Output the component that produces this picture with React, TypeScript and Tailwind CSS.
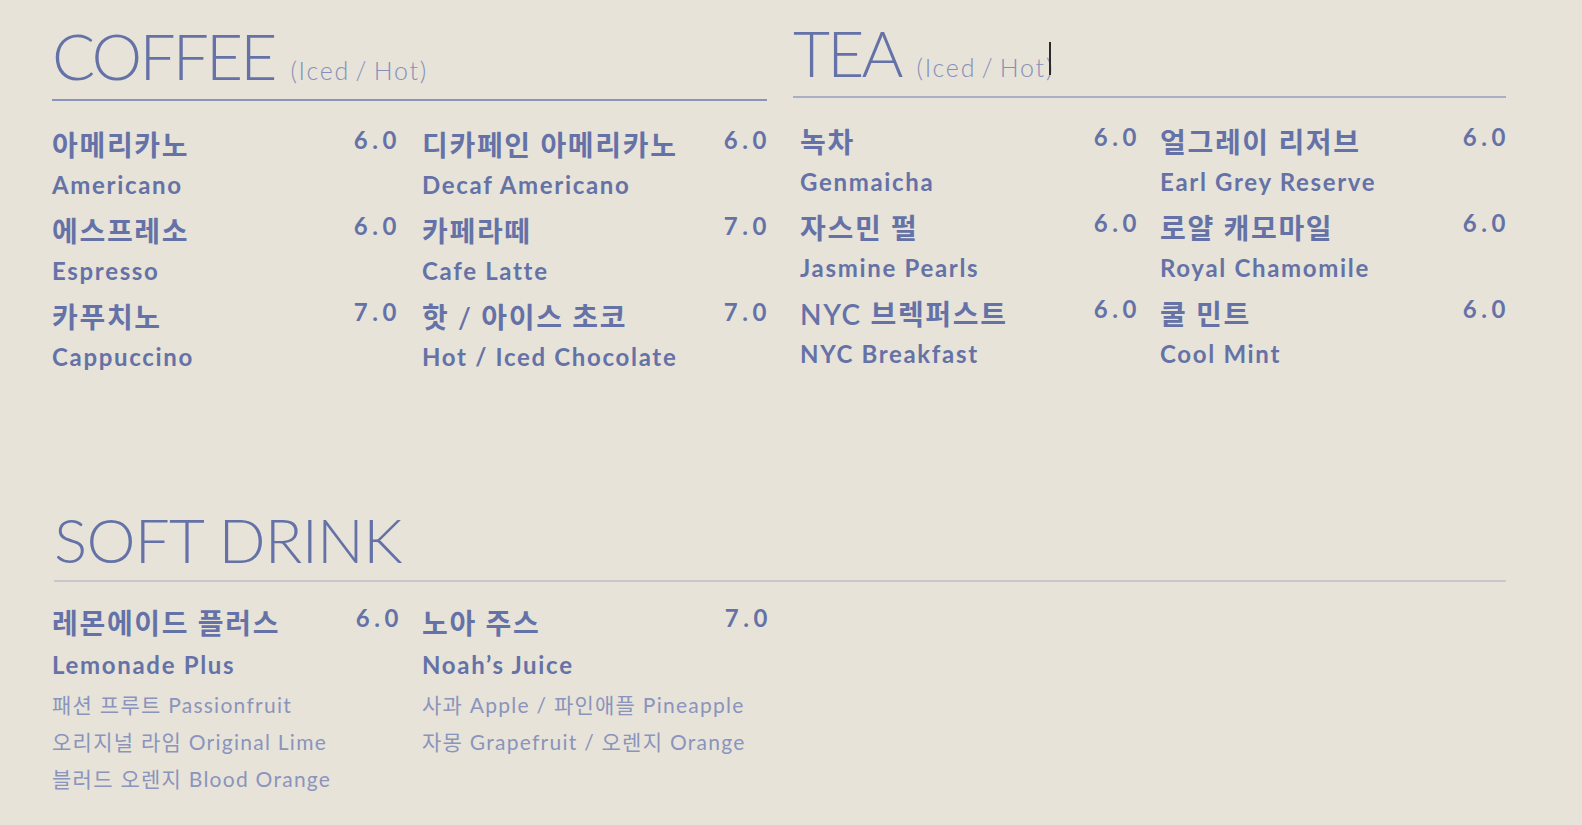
import React from "react";

type Item = { ko: string; en: string; price: string; notes?: string[] };

const coffee: Item[] = [
  { ko: "아메리카노", en: "Americano", price: "6.0" },
  { ko: "디카페인 아메리카노", en: "Decaf Americano", price: "6.0" },
  { ko: "에스프레소", en: "Espresso", price: "6.0" },
  { ko: "카페라떼", en: "Cafe Latte", price: "7.0" },
  { ko: "카푸치노", en: "Cappuccino", price: "7.0" },
  { ko: "핫 / 아이스 초코", en: "Hot / Iced Chocolate", price: "7.0" },
];

const tea: Item[] = [
  { ko: "녹차", en: "Genmaicha", price: "6.0" },
  { ko: "얼그레이 리저브", en: "Earl Grey Reserve", price: "6.0" },
  { ko: "자스민 펄", en: "Jasmine Pearls", price: "6.0" },
  { ko: "로얄 캐모마일", en: "Royal Chamomile", price: "6.0" },
  { ko: "NYC 브렉퍼스트", en: "NYC Breakfast", price: "6.0" },
  { ko: "쿨 민트", en: "Cool Mint", price: "6.0" },
];

const soft: Item[] = [
  {
    ko: "레몬에이드 플러스",
    en: "Lemonade Plus",
    price: "6.0",
    notes: ["패션 프루트 Passionfruit", "오리지널 라임 Original Lime", "블러드 오렌지 Blood Orange"],
  },
  {
    ko: "노아 주스",
    en: "Noah’s Juice",
    price: "7.0",
    notes: ["사과 Apple / 파인애플 Pineapple", "자몽 Grapefruit / 오렌지 Orange"],
  },
];

function MenuItem({ item }: { item: Item }) {
  return (
    <div>
      <div className="flex h-[45px] items-start justify-between">
        <span className="pt-[7px] text-[28px] font-semibold leading-[38px] tracking-[0.06em]">{item.ko}</span>
        <span className="-mr-[4px] text-[24px] font-bold leading-[42px] tracking-[0.19em]">{item.price}</span>
      </div>
      <div className={`${item.notes ? "pt-[2px]" : ""} text-[24px] font-bold leading-[41px] tracking-[0.07em]`}>{item.en}</div>
      {item.notes && (
        <div className="pt-[1px] text-[21px] leading-[37px] tracking-[0.06em] text-[#8a94bd]">
          {item.notes.map((n) => (
            <div key={n}>{n}</div>
          ))}
        </div>
      )}
    </div>
  );
}

function Heading({
  title,
  sub,
  cursor,
  lineColor,
  size,
  gap,
}: {
  title: string;
  sub?: string;
  cursor?: boolean;
  lineColor: string;
  size: string;
  gap: string;
}) {
  return (
    <div>
      <div className="flex items-baseline gap-[16px]">
        <h2 className={`${size} font-light leading-none`}>{title}</h2>
        {sub && (
          <span className="relative text-[25px] font-light tracking-[0.07em] [word-spacing:-3px] text-[#8590ba]">
            {sub}
            {cursor && <span className="absolute right-[3px] top-[-7px] h-[33px] w-[2px] bg-[#2b2b2b]" />}
          </span>
        )}
      </div>
      <div className={`${gap} h-[2px] ${lineColor}`} />
    </div>
  );
}

export default function App() {
  return (
    <div className="min-h-screen bg-[#e7e3d8] text-[#6572a7] font-['Lato','Noto_Sans_CJK_KR',sans-serif]">
      <div className="pl-[52px] pr-[76px] pt-[21px]">
        <div className="grid grid-cols-[715px_715px] gap-x-[24px]">
          {/* coffee */}
          <section className="pt-[3px]">
            <Heading
              title="COFFEE"
              sub="(Iced / Hot)"
              lineColor="bg-[#8a93ba]"
              size="text-[64px] tracking-[-0.045em]"
              gap="mt-[9px]"
            />
            <div className="mt-[18px] grid grid-cols-[345px_345px] gap-x-[25px]">
              {coffee.map((it) => (
                <MenuItem key={it.en} item={it} />
              ))}
            </div>
          </section>

          {/* tea */}
          <section>
            <div className="pl-[2px]">
              <Heading
                title="TEA"
                sub="(Iced / Hot)"
                cursor
                lineColor="bg-[#a9aec5]"
                size="text-[64px] tracking-[-0.045em]"
                gap="mt-[9px]"
              />
            </div>
            <div className="mt-[18px] grid grid-cols-[337px_346px] gap-x-[23px] pl-[9px]">
              {tea.map((it) => (
                <MenuItem key={it.en} item={it} />
              ))}
            </div>
          </section>
        </div>

        {/* soft drink */}
        <section className="mt-[131px]">
          <div className="pl-[2px]">
            <Heading title="SOFT DRINK" lineColor="bg-[#c7c6cb]" size="text-[62px] tracking-[-0.012em]" gap="mt-[10px]" />
          </div>
          <div className="mt-[15px] grid grid-cols-[347px_346px] gap-x-[23px]">
            {soft.map((it) => (
              <MenuItem key={it.en} item={it} />
            ))}
          </div>
        </section>
      </div>
    </div>
  );
}
